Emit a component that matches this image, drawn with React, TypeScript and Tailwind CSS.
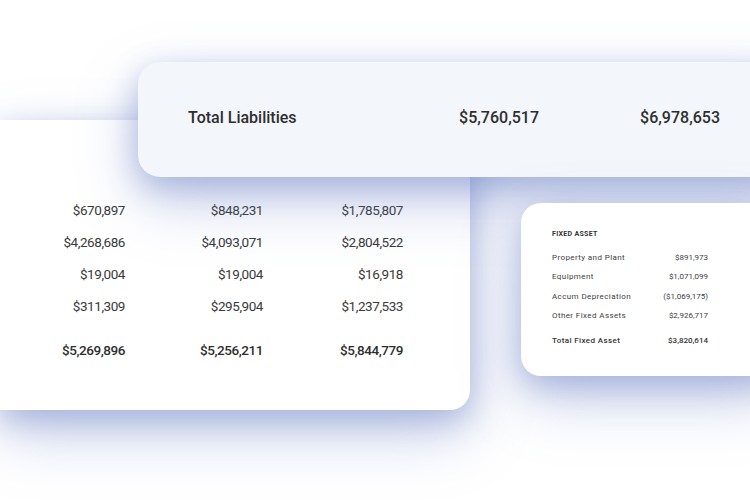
const rows = [
	["$670,897", "$848,231", "$1,785,807"],
	["$4,268,686", "$4,093,071", "$2,804,522"],
	["$19,004", "$19,004", "$16,918"],
	["$311,309", "$295,904", "$1,237,533"],
];

const totals = ["$5,269,896", "$5,256,211", "$5,844,779"];

const fixedAssets = [
	["Property and Plant", "$891,973"],
	["Equipment", "$1,071,099"],
	["Accum Depreciation", "($1,069,175)"],
	["Other Fixed Assets", "$2,926,717"],
];

export default function App() {
	return (
		<div className="relative w-[750px] h-[500px] overflow-hidden bg-white font-['Roboto',sans-serif] text-[#3a3a3a]">
			{/* balance card */}
			<section className="absolute left-0 top-[120px] w-[470px] h-[290px] bg-white rounded-br-[20px] shadow-[0_10px_30px_rgba(100,122,195,0.4),0_24px_60px_rgba(100,122,195,0.35)]">
				<div className="pt-[74px] text-[13.5px] tracking-[-0.45px]">
					{rows.map((r, i) => (
						<div key={i} className="grid grid-cols-[125px_138px_140px] h-[32px] items-center text-right">
							{r.map((v) => (
								<p key={v}>{v}</p>
							))}
						</div>
					))}
					<div className="grid grid-cols-[125px_138px_140px] h-[32px] mt-[12px] items-center text-right font-medium text-[#2e2e2e]">
						{totals.map((v) => (
							<p key={v}>{v}</p>
						))}
					</div>
				</div>
			</section>

			{/* total liabilities */}
			<section className="absolute left-[138px] top-[62px] w-[660px] h-[115px] bg-[#f3f6fa] rounded-[22px] shadow-[0_10px_30px_rgba(100,122,195,0.4),0_24px_60px_rgba(100,122,195,0.35)] flex items-center pl-[50px] pb-[4px] text-[16px] font-medium text-[#2e2e2e]">
				<p className="w-[230px]">Total Liabilities</p>
				<p className="w-[121px] text-right">$5,760,517</p>
				<p className="w-[181px] text-right">$6,978,653</p>
			</section>

			{/* fixed asset */}
			<section className="absolute left-[521px] top-[203px] w-[260px] h-[173px] bg-white rounded-[20px] shadow-[0_10px_30px_rgba(100,122,195,0.4),0_24px_60px_rgba(100,122,195,0.35)] pl-[31px] pt-[24px] text-[8px] text-[#404040]">
				<div className="w-[156px]">
					<p className="h-[14px] leading-[14px] text-[7px] font-bold tracking-[0.3px] text-[#333]">FIXED ASSET</p>
					<div className="mt-[7px]">
						{fixedAssets.map(([label, value]) => (
							<div key={label} className="flex justify-between h-[19.5px] items-center">
								<span className="tracking-[0.4px]">{label}</span>
								<span>{value}</span>
							</div>
						))}
					</div>
					<div className="flex justify-between h-[19.5px] items-center mt-[5px] font-medium text-[#333]">
						<span className="tracking-[0.4px]">Total Fixed Asset</span>
						<span>$3,820,614</span>
					</div>
				</div>
			</section>
		</div>
	);
}
